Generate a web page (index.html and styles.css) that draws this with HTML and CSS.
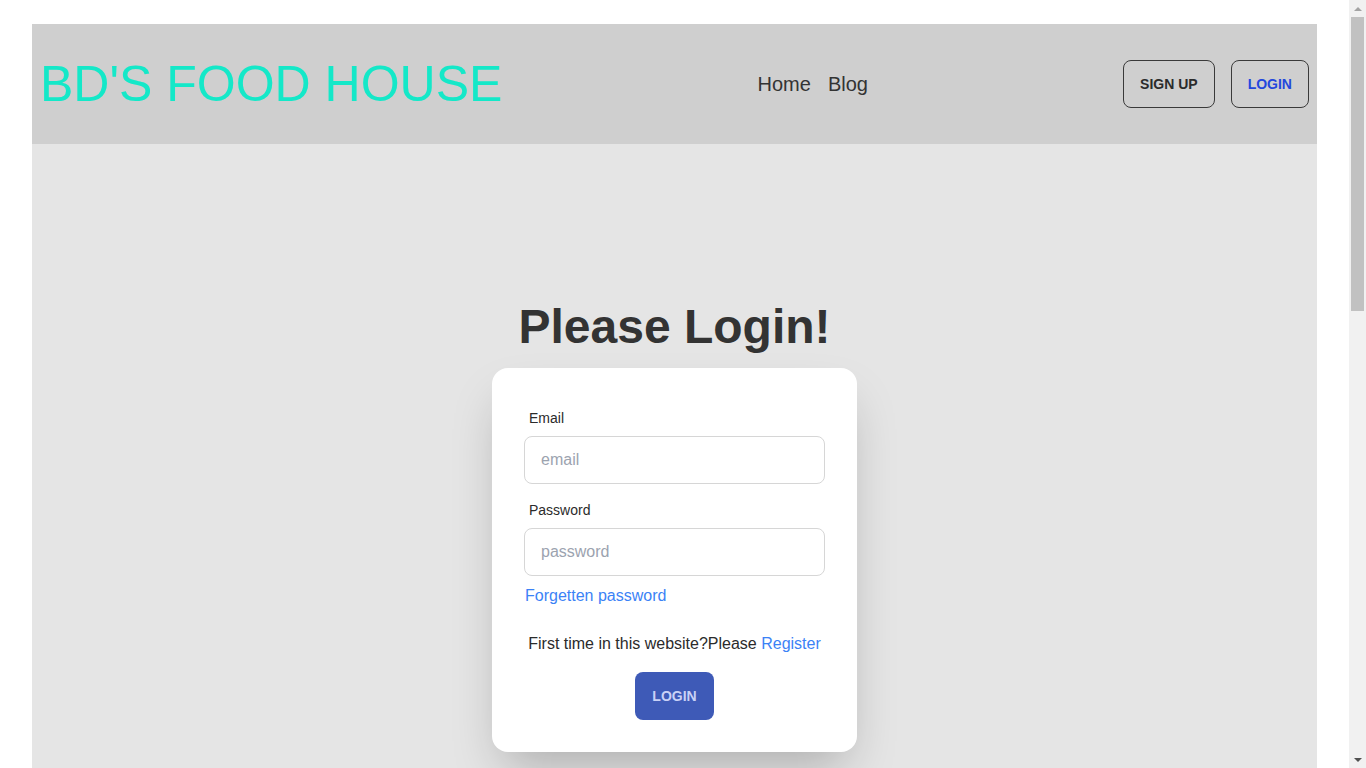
FILE: index.html
```html
<!DOCTYPE html>
<html lang="en">
<head>
<meta charset="utf-8">
<title>BD'S FOOD HOUSE</title>
<link rel="stylesheet" href="styles.css">
</head>
<body>
<div class="page">
  <header class="navbar">
    <a class="brand" href="#">BD'S FOOD HOUSE</a>
    <nav class="nav-links">
      <a href="#">Home</a>
      <a href="#">Blog</a>
    </nav>
    <div class="nav-actions">
      <button class="btn btn-outline">Sign up</button>
      <button class="btn btn-outline btn-blue">Login</button>
    </div>
  </header>
  <main class="hero">
    <h1 class="hero-title">Please Login!</h1>
    <form class="card">
      <div class="form-control">
        <label class="label">Email</label>
        <input class="input" type="text" placeholder="email">
      </div>
      <div class="form-control gap-top">
        <label class="label">Password</label>
        <input class="input" type="password" placeholder="password">
        <label class="label-link"><a href="#">Forgetten password</a></label>
      </div>
      <p class="register">First time in this website?Please <a href="#">Register</a></p>
      <div class="submit-row">
        <button class="btn btn-primary" type="button">Login</button>
      </div>
    </form>
  </main>
</div>
<div class="fake-scrollbar" aria-hidden="true">
  <span class="sb-arrow sb-up"></span>
  <div class="sb-track"><div class="sb-thumb"></div></div>
  <span class="sb-arrow sb-down"></span>
</div>
</body>
</html>
```

FILE: styles.css
```css
* { box-sizing: border-box; }

html, body {
  margin: 0;
  padding: 0;
  background: #ffffff;
  font-family: "Liberation Sans", Arial, sans-serif;
  color: #2b2b2b;
}

::-webkit-scrollbar {
  width: 0;
  height: 0;
}

.page {
  margin: 24px 49px 0 32px;
}

.navbar {
  height: 120px;
  background: #cfcfcf;
  display: flex;
  align-items: center;
  justify-content: space-between;
  padding: 0 8px;
}

.brand {
  font-size: 50px;
  color: #14e8c8;
  text-decoration: none;
  line-height: 1;
}

.nav-links {
  display: flex;
  gap: 17px;
}

.nav-links a {
  font-size: 20px;
  color: #333333;
  text-decoration: none;
}

.nav-actions {
  display: flex;
  gap: 16px;
}

.btn {
  height: 48px;
  padding: 0 16px;
  border-radius: 8px;
  font-family: "Liberation Sans", Arial, sans-serif;
  font-size: 14px;
  font-weight: 700;
  text-transform: uppercase;
  cursor: pointer;
}

.btn-outline {
  background: transparent;
  border: 1px solid #3a3a3a;
  color: #2b2b2b;
}

.btn-blue {
  color: #2247dd;
}

.btn-primary {
  padding: 0 17px;
  background: #3e5ab7;
  border: none;
  color: #c9d1f6;
}

.hero {
  background: #e5e5e5;
  min-height: 1773px;
  padding-top: 159px;
  display: flex;
  flex-direction: column;
  align-items: center;
}

.hero-title {
  margin: 0;
  font-size: 48px;
  line-height: 48px;
  font-weight: 700;
  color: #333333;
}

.card {
  margin-top: 17px;
  width: 365px;
  background: #ffffff;
  border-radius: 16px;
  padding: 32px;
  box-shadow: 0 25px 50px -12px rgba(0, 0, 0, 0.25);
  display: flex;
  flex-direction: column;
}

.form-control {
  display: flex;
  flex-direction: column;
}

.gap-top {
  margin-top: 8px;
}

.label {
  padding: 8px 4px 8px 5px;
  font-size: 14px;
  line-height: 20px;
  color: #2b2b2b;
}

.input {
  height: 48px;
  border: 1px solid #d6d6d6;
  border-radius: 8px;
  padding: 0 16px;
  font-family: "Liberation Sans", Arial, sans-serif;
  font-size: 16px;
  color: #2b2b2b;
  background: #ffffff;
  outline: none;
}

.input::placeholder {
  color: #9ca3af;
}

.label-link {
  padding: 10px 0 8px 1px;
  font-size: 16px;
  line-height: 20px;
}

.label-link a,
.register a {
  color: #3b82f6;
  text-decoration: none;
}

.register {
  margin: 18px 0 0 0;
  font-size: 16px;
  line-height: 24px;
  text-align: center;
  color: #2b2b2b;
}

.submit-row {
  margin-top: 16px;
  display: flex;
  justify-content: center;
}

/* browser scrollbar as seen in the screenshot */
.fake-scrollbar {
  position: fixed;
  top: 0;
  right: 0;
  width: 17px;
  height: 100vh;
  background: #f1f1f1;
  display: flex;
  flex-direction: column;
}

.sb-arrow {
  height: 17px;
  flex: 0 0 17px;
  display: flex;
  align-items: center;
  justify-content: center;
}

.sb-arrow::before {
  content: "";
  width: 0;
  height: 0;
  border-left: 4px solid transparent;
  border-right: 4px solid transparent;
}

.sb-up::before {
  border-bottom: 4px solid #a3a3a3;
}

.sb-down::before {
  border-top: 4px solid #505050;
}

.sb-track {
  flex: 1;
  padding: 0 2px;
}

.sb-thumb {
  height: 294px;
  background: #c1c1c1;
}
```
